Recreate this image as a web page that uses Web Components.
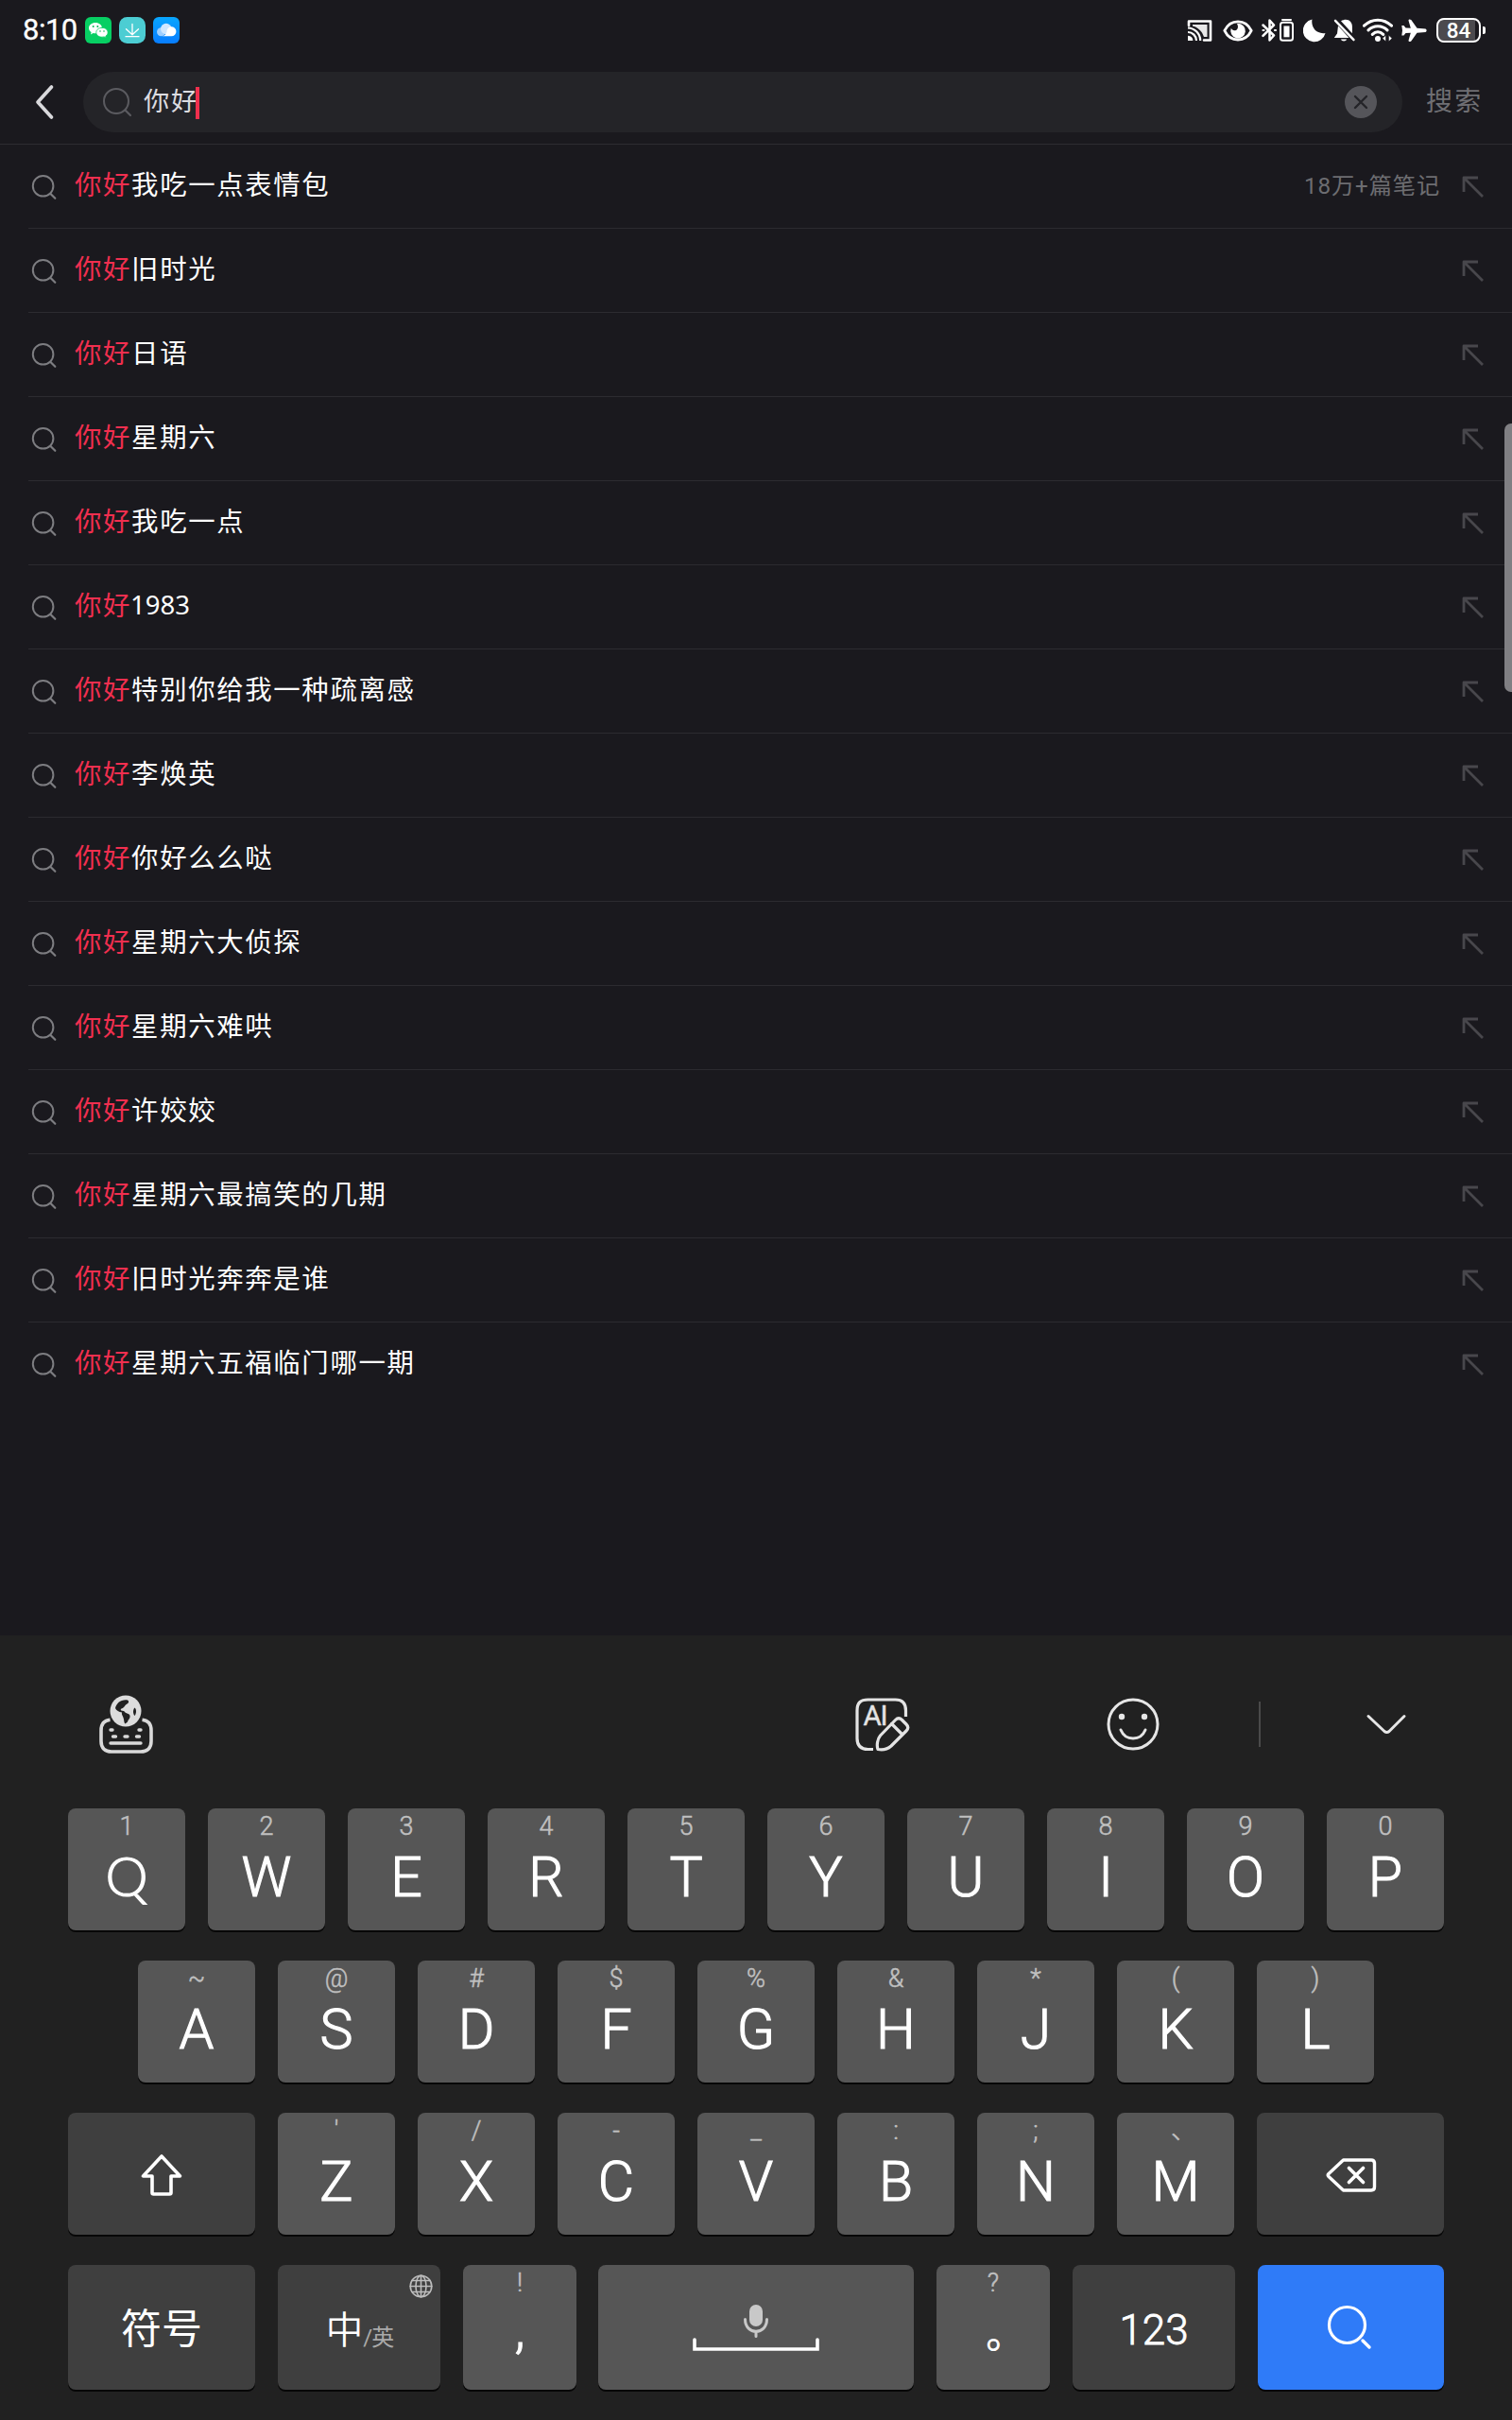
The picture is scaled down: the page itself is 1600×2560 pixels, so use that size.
<!DOCTYPE html>
<html lang="zh-CN">
<head>
<meta charset="utf-8">
<title>搜索</title>
<style>
html,body{margin:0;padding:0;background:#1a191e}
body{width:1600px;height:2560px;overflow:hidden;font-family:Roboto,"Noto Sans CJK SC",sans-serif;color:#fff}
</style>
</head>
<body>
<search-screen></search-screen>
<script>
const svg=(w,h,vb,body,extra='')=>`<svg width="${w}" height="${h}" viewBox="${vb}" fill="none" stroke-linecap="round" stroke-linejoin="round" ${extra}>${body}</svg>`;
class Base extends HTMLElement{
  constructor(){super();this.attachShadow({mode:'open'});}
  connectedCallback(){this.shadowRoot.innerHTML='<style>:host{display:block;box-sizing:border-box}svg{display:block;flex:none}'+this.css()+'</style>'+this.html();}
  css(){return ''} html(){return '<slot></slot>'}
}
const def=(n,css,html)=>customElements.define(n,class extends Base{css(){return css} html(){return typeof html==='function'?html(this):html}});

def('status-bar',`
:host{display:flex;height:64px;padding:0 28px 0 24px;align-items:flex-start;justify-content:space-between}
.l,.r{display:flex;align-items:flex-start}
.time{font-size:31px;font-weight:400;line-height:38px;letter-spacing:-.5px;width:66px;margin-top:13px;-webkit-text-stroke:.3px #fff;white-space:nowrap}
.l svg{margin:18px 8px 0 0}
.r{height:64px}
.r svg{margin-top:18px}
.bat{margin:19px 0 0 10px;width:47px;height:26px;box-sizing:border-box;border:2px solid #fff;border-radius:8px;font-size:22.500px;line-height:23px;font-weight:500;text-align:center;background:linear-gradient(90deg,#4b4a4e 39px,#1a191e 39px)}
.nub{width:3px;height:8px;border-radius:0 2px 2px 0;background:#fff;margin:28px 0 0 2px}
`,`<div class="l"><span class="time">8:10</span>
${svg(28,28,'0 0 28 28','<rect width="28" height="28" rx="6" fill="#07cf63"/><path d="M11 6c-4 0-7 2.600-7 5.700 0 1.800 1 3.400 2.600 4.400L6 18.400l2.600-1.400c.8.200 1.600.3 2.400.3 4 0 7-2.500 7-5.600S15 6 11 6Z" fill="#fff"/><path d="M18 11.300c-3.500 0-6.200 2.200-6.200 5s2.700 4.900 6.200 4.900c.8 0 1.500-.1 2.200-.3l2.100 1.200-.5-1.900c1.500-1 2.300-2.300 2.300-3.900 0-2.800-2.700-5-6.100-5Z" fill="#fff" stroke="#07cf63" stroke-width=".8"/><g fill="#07b858"><circle cx="8.700" cy="10" r="1"/><circle cx="13.300" cy="10" r="1"/><circle cx="16" cy="15" r=".8"/><circle cx="20" cy="15" r=".8"/></g>')}
${svg(28,28,'0 0 28 28','<rect width="28" height="28" rx="8.500" fill="#4ccdd3"/><path d="M14 7.500v11M7.500 12.800l6.500 6 6.500-6M7 20.700h14" stroke="#fff" stroke-width="1.300"/>')}
${svg(28,28,'0 0 28 28','<defs><linearGradient id="c" x1="0" y1="0" x2="0" y2="1"><stop stop-color="#08a6ff"/><stop offset="1" stop-color="#087cff"/></linearGradient></defs><rect width="28" height="28" rx="6" fill="url(#c)"/><circle cx="8.500" cy="15.800" r="4.500" fill="#9dcfff"/><circle cx="13.800" cy="12.500" r="5.800" fill="#cfe7ff"/><path d="M9.500 20.300c3-.5 4-2 5-4.300a5 5 0 1 1 5 4.300Z" fill="#fff"/>')}
</div>
<div class="r">
${svg(28,28,'0 0 28 28','<path d="M2 9V4.500h23v20h-7" stroke="#fff" stroke-width="2.600"/><path d="M6 8h15.500v13H18C15.500 14.500 12 11 6 9.500Z" fill="#e8e8e8"/><path d="M1 11.500A13.500 13.500 0 0 1 14.200 25M1 16a9 9 0 0 1 9 9" stroke="#fff" stroke-width="2.200" stroke-linecap="butt"/><path d="M1 19.800A5.600 5.600 0 0 1 6.400 25H1Z" fill="#fff"/>','style="margin-right:10px"')}
${svg(32,28,'0 0 32 28','<path d="M1.800 14.400C8 1.600 24 1.600 30.200 14.400 24 27.200 8 27.200 1.800 14.400Z" stroke="#fff" stroke-width="2.800"/><path d="M16 6.800a7.800 7.800 0 1 1-7.200 5c1 2.900 5 3.200 6.500.9 1.300-2 .6-4-.3-5.800Z" fill="#fff"/>','style="margin-right:9px"')}
${svg(35,28,'0 0 35 28','<path d="M1.500 8.500 13 19.500l-4.500 5V3.500L13 8.500 1.500 19.800" stroke="#fff" stroke-width="2.500"/><path d="M1.500 14h1M14 14h1" stroke="#fff" stroke-width="2.200"/><rect x="20" y="5.800" width="13" height="19" rx="2.500" stroke="#fff" stroke-width="2"/><path d="M22 3h9" stroke="#fff" stroke-width="2"/><path d="M23.500 9.500h6v11.800h-6Z" fill="#fff"/>','style="margin-right:9px"')}
${svg(24,28,'0 0 24 28','<path d="M9.500 2.500C8 10.500 13.500 18.500 23.500 17A12 12 0 1 1 9.500 2.500Z" fill="#fff"/>','style="margin-right:8px"')}
${svg(24,28,'0 0 24 28','<path d="M8 4.300c6.500-4 12.300.2 11.900 6.200v6.800Z" fill="#fff"/><path d="M5 9.300 16.500 22H.8L4 17.500Z" fill="#fff"/><path d="m2 3.800 19.500 20.400" stroke="#fff" stroke-width="2.400"/><path d="M7.800 23.500h6.500a3.500 3 0 0 1-6.500 0Z" fill="#fff"/>','style="margin-right:7px"')}
${svg(32,28,'0 0 32 28','<path d="M1.500 9.200c8.300-8 20.700-8 29 0M6 13.900c5.500-5.500 14.500-5.500 20 0M10.300 18.400c3.500-3.500 8-3.300 11.400 0" stroke="#fff" stroke-width="3"/><circle cx="16" cy="23" r="3" fill="#fff"/><path d="m21 22.500 3.500-3.200v6.400Zm10 0-3.500-3.200v6.400Z" fill="#fff" stroke="#1a191e" stroke-width=".5"/>','style="margin-right:9px"')}
${svg(27,28,'0 0 27 28','<path d="M25.500 12.500c1.500 1 1.500 2.500 0 3.500l-9 .8-6.200 8.700c-1.500 1-2.800.7-2.800-.8l2.300-8-5.300.3L2.500 19.500H.3L1 14.200.3 9h2.200l2 2.500 5.300.3-2.300-8c0-1.500 1.300-1.800 2.800-.8l6.200 8.700Z" fill="#fff"/>')}
<span class="bat">84</span><span class="nub"></span></div>`);

def('search-field',`
:host{display:flex;align-items:center;width:1396px;height:64px;border-radius:32px;background:#242428;padding:0 27px 0 20px}
.q{font-size:27.200px;letter-spacing:1.700px;line-height:40px;color:#dcdce0;margin-left:12px;margin-top:0}
.caret{width:4px;height:34px;background:#f12f4d;margin-left:-2.500px;margin-top:2px}
.x{margin-left:auto}
`,`${svg(32,32,'0 0 32 32','<circle cx="15" cy="15" r="13" stroke="#5b5b60" stroke-width="2"/><path d="m24.500 24.500 5.500 5.500" stroke="#5b5b60" stroke-width="2.200"/>')}
<span class="q"><slot></slot></span><i class="caret"></i>${svg(34,34,'0 0 34 34','<circle cx="17" cy="17" r="17" fill="#55555a"/><path d="m11 11 12 12m0-12L11 23" stroke="#242428" stroke-width="2.400"/>','class="x"')}`);

def('search-header',`
:host{display:flex;height:89px;align-items:flex-start;padding:12px 0 0 36px;border-bottom:1px solid #2d2c31}
.b{margin:13px 28px 0 0}
.go{font-size:28px;letter-spacing:2.200px;line-height:40px;color:#6f6f73;margin:12px 0 0 25px;white-space:nowrap}
`,`${svg(24,38,'0 0 24 38','<path d="M18.500 3 4 19l14.500 16" stroke="#d9d9dc" stroke-width="3.700"/>','class="b"')}<search-field>你好</search-field><span class="go">搜索</span>`);

def('suggest-row',`
:host{display:flex;height:89px;margin-left:30px;padding:0 29px 0 3px;align-items:center;border-bottom:1px solid #2c2b30}
:host([last]){border-color:transparent}
.t{font-size:28.400px;letter-spacing:1.650px;line-height:42px;white-space:nowrap;margin-left:18px;margin-top:0}
.t b{font-weight:400;color:#f12f4f}
.n{margin-left:auto;font-size:24.200px;letter-spacing:.9px;line-height:40px;color:#6d6d71;margin-right:23px;margin-top:-1px}
::slotted(span){display:inline-block;margin:-1px 0 0 -1px;vertical-align:1px;line-height:1;letter-spacing:0;font-family:"Noto Sans",Roboto;font-size:27.500px}
.s,.a{margin-top:1px}
`,e=>`${svg(28,28,'0 0 28 28','<circle cx="12.600" cy="12.800" r="10.800" stroke="#7d7d81" stroke-width="2"/><path d="m20.500 21 4.800 4.800" stroke="#7d7d81" stroke-width="2.200"/>','class="s"')}
<span class="t"><b>你好</b><slot></slot></span><span class="n">${e.getAttribute('count')||''}</span>
${svg(24,24,'0 0 24 24','<path d="M2 17V2h15M2.500 2.500l19.500 19.500" stroke="#48474c" stroke-width="2.800" stroke-linecap="butt"/>','class="a"')}`);

def('scroll-thumb',`:host{position:absolute;right:0;top:448px;width:8px;height:284px;border-radius:7px 0 0 7px;background:#807f83}`,'');

def('key-cap',`
:host{display:flex;flex-direction:column;align-items:center;width:124px;height:100%;border-radius:8px;background:#565656;box-shadow:0 2px 0 #070707;flex:none;position:relative}
:host([dark]){background:#3f3f3f}
:host([wide]){width:198px}:host([mid]){width:172px}:host([narrow]){width:120px}:host([space]){width:334px;margin-left:-1px}
:host([go]){width:197px;background:#2f7bf8}
.h{font-size:27px;line-height:39px;height:37px;color:#c0c0c0;font-weight:300;-webkit-text-stroke:.5px #c0c0c0;white-space:pre}
:host([shift]) .h{padding-left:17px}
.m{font-size:59px;line-height:71px;font-weight:300;-webkit-text-stroke:1.100px #fff;white-space:nowrap;display:flex}
:host([q]) .m{font-family:Lato;font-size:57px;line-height:69px;font-weight:300;-webkit-text-stroke:1.200px #fff}
:host([plain]) .h{display:none}
:host([plain]){justify-content:center}
:host([plain]) .m{font-size:44px;line-height:60px;-webkit-text-stroke:0}
`,e=>`<span class="h">${e.getAttribute('hint')||''}</span><span class="m"><slot></slot></span>`);

def('key-row',`:host{display:flex;height:129px;gap:24px;margin-bottom:32px;justify-content:center}:host([bottom]){height:132px;justify-content:flex-start}`,'<slot></slot>');

def('tool-bar',`
:host{display:flex;height:183px;padding:0 0 0 105px;align-items:flex-start}
.i1{margin:63px 0 0}.i2{margin:66px 0 0 743px}.i3{margin:65px 0 0 208px}.d{width:2px;height:48px;background:#4a4a4a;margin:70px 0 0 105px}.i4{margin:81px 0 0 111px}
text{font-family:Roboto,sans-serif}
`,`${svg(57,62,'0 0 57 62','<path d="M11.500 26.300C5 27 2 31.500 2 37.500V49c0 7 4 11 11 11h31c7 0 11-4 11-11V37.500c0-6-3-10.500-9.500-11.200" stroke="#d9d9d9" stroke-width="3.600" stroke-linecap="butt"/><circle cx="28" cy="17" r="16.500" fill="#dcdcdc"/><path d="M17 14c1-5 6-9.500 13-8.500 2 1.500 1 3-.5 4-2 1-2 2-3.500 3.500s-4 1.500-3 3 3 0 4 2 5 1 5.500 4-2 4-2.500 6.500l-2.500 2c-1.500-1-1-4-2-6.500s-2-4-1.500-5.500c-3-.5-6-2-7-4.500Z" fill="#212121"/><path d="M37.500 13.500c2 1.500 2 6 0 8.500-2-2-2-6.500 0-8.500Z" fill="#212121"/><path d="M12 37h2M42 37h2M14.500 44h3M27 44h3M39.500 44h3M12 51h32" stroke="#d9d9d9" stroke-width="3.400"/>','class="i1"')}
${svg(58,58,'0 0 58 58','<path d="M19 54.500h-5.500C5.500 54.500 2 50.500 2 43V13.500C2 5.500 5.500 2 13.500 2h29C50 2 53.500 5.500 53.500 13.500V20" stroke="#e4e4e4" stroke-width="3.200" stroke-linecap="butt"/><path d="M24 54.500c-1.500-4-.5-11 2.500-14.500L42.500 23.500c2.500-2.500 4.500-2.500 7 0l4.500 4.500c2.500 2.500 2.500 4.500 0 7L38 51c-4 3.500-9 4.500-14 3.500ZM38.500 27.500l11 11" stroke="#e4e4e4" stroke-width="3.200"/><text x="8.500" y="29" font-size="29.500" fill="#e4e4e4" stroke="#e4e4e4" stroke-width=".4" textLength="26">AI</text>','class="i2"')}
${svg(56,58,'0 0 56 58','<circle cx="28" cy="29" r="26" stroke="#e6e6e6" stroke-width="3"/><circle cx="16" cy="21" r="3.200" fill="#e6e6e6"/><circle cx="40" cy="21" r="3.200" fill="#e6e6e6"/><path d="M15 35c5 12 21 12 26 0" stroke="#e6e6e6" stroke-width="3"/>','class="i3"')}
<span class="d"></span>
${svg(44,26,'0 0 44 26','<path d="M3 4.500 20 20.500q2.500 2 5 0L41 4.500" stroke="#e6e6e6" stroke-width="3"/>','class="i4"')}`);

def('soft-keyboard',`
:host{display:block;height:830px;background:#212121}
.keys{padding:0 72px}
.cn{margin-top:4px;font-weight:400;font-size:43px}
.zy{display:block;font-size:39.500px;font-weight:350;line-height:60px;margin:7px 0 0 1px}
.zy small{font-size:24px;letter-spacing:-1px;color:#a9a9a9;font-weight:400;vertical-align:-2px;line-height:1}
.globe{position:absolute;right:8px;top:10px}
.comma{line-height:63px;font-size:56px}
.ring{font-size:40px;line-height:75px;margin-left:25px}
.num{margin:5px 0 0 0;-webkit-text-stroke:.8px #fff}
.sp{display:flex;flex-direction:column;align-items:center;margin-top:0}
.find{margin-right:3px}
`,()=>{
const k=(s,h)=>[...s].map((c,i)=>`<key-cap ${c==='Q'?'q':''} ${h[i]==='、'?'shift':''} hint="${h[i]}">${c}</key-cap>`).join('');
return `<tool-bar></tool-bar><div class="keys">
<key-row>${k('QWERTYUIOP','1234567890')}</key-row>
<key-row>${k('ASDFGHJKL',['~','@','#','$','%','&amp;','*','(',')'])}</key-row>
<key-row><key-cap wide dark plain>${svg(46,46,'0 0 46 46','<path d="M23 4 3.500 25H13v17.500q0 1.500 1.500 1.500h17q1.500 0 1.500-1.500V25h9.500Z" stroke="#fff" stroke-width="3.600"/>')}</key-cap>${k('ZXCVBNM',["'",'/','-','_',':',';','、'])}<key-cap wide dark plain>${svg(54,38,'0 0 54 38','<path d="M18.500 3H48q3.500 0 3.500 3.500v25q0 3.500-3.500 3.500H18.500L3 20.500q-1.500-1.500 0-3Z" stroke="#fff" stroke-width="3.400"/><path d="m24.500 11.500 15 15m0-15-15 15" stroke="#fff" stroke-width="3.700"/>','style="margin:2px 0 0 2px"')}</key-cap></key-row>
<key-row bottom><key-cap wide dark plain><span class="cn">符号</span></key-cap>
<key-cap mid dark plain><span class="zy">中<small>/英</small></span>${svg(25,25,'0 0 25 25','<g stroke="#bdbdbd" stroke-width="1.600"><circle cx="12.500" cy="12.500" r="11.300"/><ellipse cx="12.500" cy="12.500" rx="5.500" ry="11.300"/><path d="M1.200 12.500h22.600M12.500 1.200v22.600M3 6.500h19M3 18.500h19"/></g>','class="globe"')}</key-cap>
<key-cap narrow hint="!"><span class="comma">,</span></key-cap>
<key-cap space plain><span class="sp">${svg(136,52,'0 0 136 52','<rect x="61" y="2" width="14" height="23" rx="7" fill="#c8c8c8"/><path d="M56.500 17.500c0 17 23 17 23 0M68 31v4.500" stroke="#c8c8c8" stroke-width="3"/><path d="M3 39v10h130V39" stroke="#fff" stroke-width="3.600" stroke-linejoin="miter"/>','style="margin-right:1px"')}</span></key-cap>
<key-cap narrow hint="?"><span class="ring">。</span></key-cap>
<key-cap mid dark plain><span class="num">123</span></key-cap>
<key-cap go plain>${svg(48,48,'0 0 48 48','<circle cx="21.500" cy="21.500" r="19" stroke="#fff" stroke-width="3.200"/><path d="m38 38 7 7" stroke="#fff" stroke-width="3.400"/>','class="find"')}</key-cap></key-row></div>`});

def('search-screen',`
:host{display:flex;flex-direction:column;width:1600px;height:2560px;position:relative;background:#1a191e}
.list{flex:1}`,()=>{
const r=['我吃一点表情包','旧时光','日语','星期六','我吃一点','<span>1983</span>','特别你给我一种疏离感','李焕英','你好么么哒','星期六大侦探','星期六难哄','许姣姣','星期六最搞笑的几期','旧时光奔奔是谁','星期六五福临门哪一期'];
return `<status-bar></status-bar><search-header></search-header><div class="list">${r.map((t,i)=>`<suggest-row ${i?'':'count="18万+篇笔记"'} ${i==14?'last':''}>${t}</suggest-row>`).join('')}</div><scroll-thumb></scroll-thumb><soft-keyboard></soft-keyboard>`});
</script>
</body>
</html>
